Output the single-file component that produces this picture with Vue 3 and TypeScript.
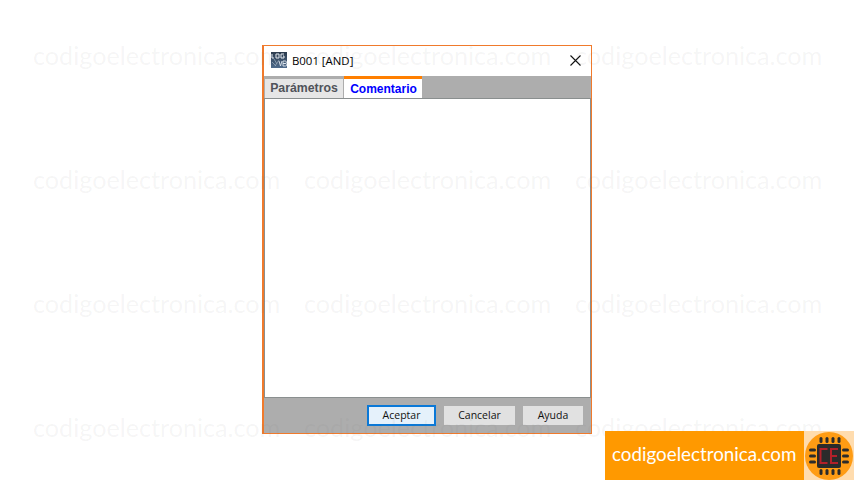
<script setup lang="ts">
const site = 'codigoelectronica.com'
const marks = Array.from({ length: 12 }, (_, i) => i)
const pinsH = [0, 1, 2, 3]
const pinsV = [0, 1, 2]
</script>

<template>
  <div class="page">
    <div class="dialog">
      <div class="titlebar">
        <svg class="app-icon" width="16" height="16" viewBox="0 0 16 16">
          <defs>
            <linearGradient id="logoBg" x1="0" y1="0" x2="0" y2="1">
              <stop offset="0" stop-color="#2b3a4c" />
              <stop offset="1" stop-color="#4f6b8c" />
            </linearGradient>
          </defs>
          <rect width="16" height="16" fill="url(#logoBg)" />
          <path d="M1 2v4h2M5 2h3v4H5zM13 2h-3v4h3V4h-1" fill="none" stroke="#e8edf2" stroke-width="1" />
          <path d="M3 7l3 5M8 8l-4 6M1 10l4 4" fill="none" stroke="#9fb0c2" stroke-width="0.7" />
          <path d="M8 9l1.5 5L11 9M12 9v5h2.5a1.2 1.2 0 0 0 0-2.5H12h2.2a1.2 1.2 0 0 0 0-2.5H12" fill="none" stroke="#dfe6ee" stroke-width="0.9" />
        </svg>
        <span class="title">B001 [AND]</span>
        <svg class="close" width="11" height="11" viewBox="0 0 11 11">
          <path d="M0.5 0.5l10 10M10.5 0.5l-10 10" stroke="#111" stroke-width="1.1" fill="none" />
        </svg>
      </div>

      <div class="tabs">
        <div class="tab first">Parámetros</div>
        <div class="tab active">Comentario</div>
      </div>

      <div class="content"></div>

      <div class="footer">
        <button class="btn primary">Aceptar</button>
        <button class="btn cancel">Cancelar</button>
        <button class="btn">Ayuda</button>
      </div>
    </div>

    <div class="watermarks">
      <span v-for="m in marks" :key="m">{{ site }}</span>
    </div>

    <div class="badge">
      <div class="badge-text">{{ site }}</div>
      <div class="badge-logo">
        <svg width="48" height="48" viewBox="0 0 48 48">
          <circle cx="24" cy="24" r="24" fill="#ff9c14" />
          <rect x="12" y="12" width="24" height="24" rx="2" fill="#2b2b2b" />
          <g fill="#2b2b2b">
            <rect v-for="i in pinsH" :key="'t' + i" :x="14.5 + i * 6" y="5" width="3" height="6" rx="1.5" />
            <rect v-for="i in pinsH" :key="'b' + i" :x="14.5 + i * 6" y="37" width="3" height="6" rx="1.5" />
            <rect v-for="i in pinsV" :key="'l' + i" x="4" :y="16.5 + i * 6" width="7" height="3" rx="1.5" />
            <rect v-for="i in pinsV" :key="'r' + i" x="37" :y="16.5 + i * 6" width="7" height="3" rx="1.5" />
          </g>
          <path d="M22.5 17H15.5v14h7M33 17h-7v14h7M26 24h6" fill="none" stroke="#b3202a" stroke-width="2" />
        </svg>
      </div>
    </div>
  </div>
</template>

<style>
body {
  background: #fff;
}
</style>

<style scoped>
.page {
  position: relative;
  width: 854px;
  height: 480px;
  overflow: hidden;
  background: #fff;
  box-sizing: border-box;
  padding: 45px 0 0 262px;
}
.dialog {
  width: 330px;
  height: 389px;
  box-sizing: border-box;
  border: 1px solid #f07a2c;
  border-left-width: 2px;
  display: flex;
  flex-direction: column;
  background: #adadad;
  font-family: "Liberation Sans", Arial, sans-serif;
}
.titlebar {
  height: 30px;
  flex: none;
  box-sizing: border-box;
  background: #fff;
  display: flex;
  align-items: center;
  padding: 0 10px 2px 7px;
}
.app-icon {
  flex: none;
}
.title {
  margin-left: 5px;
  font-family: "Open Sans", "Liberation Sans", sans-serif;
  font-size: 11.4px;
  color: #000;
  flex: 1;
}
.close {
  flex: none;
}
.tabs {
  height: 22px;
  flex: none;
  display: flex;
  align-items: flex-end;
  gap: 1px;
  padding-left: 1px;
  background: #adadad;
}
.tab {
  width: 78px;
  height: 19px;
  line-height: 18px;
  box-sizing: border-box;
  text-align: center;
  font-size: 12px;
  font-weight: bold;
  color: #50535a;
  background: #e6e6e6;
}
.tab.first {
  font-size: 12.3px;
}
.tab.active {
  height: 22px;
  line-height: 20px;
  padding-left: 1px;
  border-top: 3px solid #ff7f00;
  background: #fff;
  color: #0000ff;
}
.content {
  height: 300px;
  flex: none;
  box-sizing: border-box;
  background: #fff;
  border: 1px solid #8a8f8f;
}
.footer {
  height: 35px;
  flex: none;
  display: flex;
  align-items: center;
  justify-content: flex-end;
  gap: 8px;
  padding: 0 8px 1px 0;
  box-sizing: border-box;
  background: #adadad;
}
.btn {
  width: 60px;
  height: 19px;
  padding: 0;
  border: none;
  background: #e1e1e1;
  font-family: "Open Sans", "Liberation Sans", sans-serif;
  font-size: 10.5px;
  color: #111;
}
.btn.cancel {
  width: 71px;
}
.btn.primary {
  width: 69px;
  height: 21px;
  box-sizing: border-box;
  border: 2px solid #0a78d7;
  background: #e5f1fb;
}
.watermarks {
  position: absolute;
  left: 33px;
  top: 40px;
  display: grid;
  grid-template-columns: repeat(3, 271px);
  grid-auto-rows: 124px;
  font-family: Lato, sans-serif;
  font-size: 25.2px;
  line-height: 30px;
  color: rgba(120, 120, 120, 0.07);
  white-space: nowrap;
  pointer-events: none;
}
.badge {
  position: absolute;
  right: 0;
  bottom: 0;
  width: 249px;
  height: 49px;
  display: flex;
}
.badge-text {
  width: 199px;
  background: #ff9900;
  color: #fff;
  font-family: Lato, sans-serif;
  font-size: 18.8px;
  line-height: 46px;
  padding-left: 7px;
  box-sizing: border-box;
}
.badge-logo {
  width: 50px;
  background: #ffdcae;
  display: flex;
  align-items: center;
  justify-content: center;
}
</style>
